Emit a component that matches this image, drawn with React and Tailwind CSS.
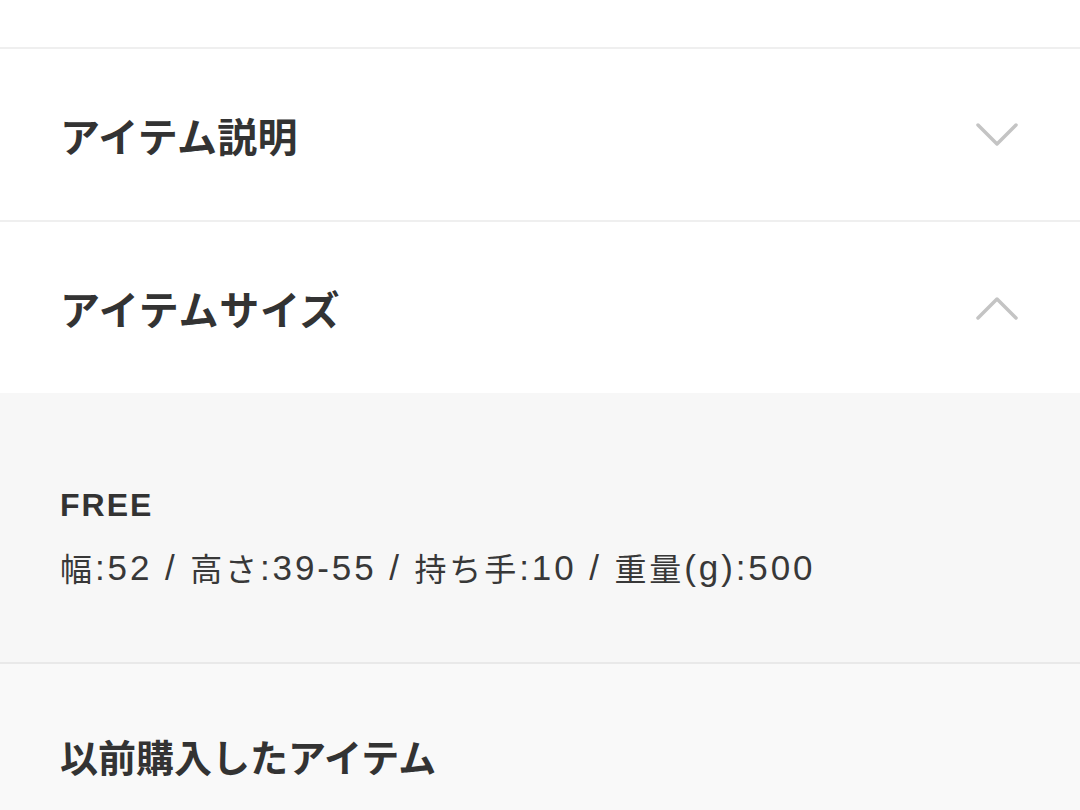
import React from "react";

function Chevron({ up }) {
  return (
    <svg width="44" height="28" viewBox="0 0 44 28" className="shrink-0">
      <path
        d={up ? "M3 24 L22 5 L41 24" : "M3 4 L22 23 L41 4"}
        fill="none"
        stroke="#c4c4c4"
        strokeWidth="3.5"
        strokeLinecap="round"
        strokeLinejoin="round"
      />
    </svg>
  );
}

function J({ children }) {
  return <span className="text-[32px] font-['Noto_Sans_CJK_JP',sans-serif]">{children}</span>;
}

export default function App() {
  return (
    <div className="w-[1080px] h-[810px] overflow-hidden bg-white text-[#333333] font-['Noto_Sans_CJK_JP',sans-serif]">
      <div className="h-[47px] bg-white" />
      <div className="h-[2px] bg-[#efefef]" />
      <div className="h-[171px] flex items-center justify-between pl-[60px] pr-[61px]">
        <span className="text-[40px] font-bold leading-none tracking-[0.3px]">アイテム説明</span>
        <Chevron />
      </div>
      <div className="h-[2px] bg-[#efefef]" />
      <div className="h-[171px] flex items-center justify-between pl-[60px] pr-[61px]">
        <span className="text-[40px] font-bold leading-none tracking-[0.8px]">アイテムサイズ</span>
        <Chevron up />
      </div>
      <div className="h-[269px] bg-[#f7f7f7] pl-[60px] pt-[96px] font-['Liberation_Sans','Noto_Sans_CJK_JP',sans-serif]">
        <div className="text-[32px] font-bold leading-none tracking-[2px]">FREE</div>
        <div className="mt-[28px] h-[36px] flex items-center text-[35px] leading-none tracking-[2.9px] text-[#383838] whitespace-pre">
          <J>幅</J>:52 / <J>高さ</J>:39-55 / <J>持ち手</J>:10 / <J>重量</J>(g):500
        </div>
      </div>
      <div className="h-[2px] bg-[#e9e9e9]" />
      <div className="h-[146px] bg-[#f9f9f9] pl-[60px] pt-[73px]">
        <span className="text-[38px] font-bold leading-none">以前購入したアイテム</span>
      </div>
    </div>
  );
}
